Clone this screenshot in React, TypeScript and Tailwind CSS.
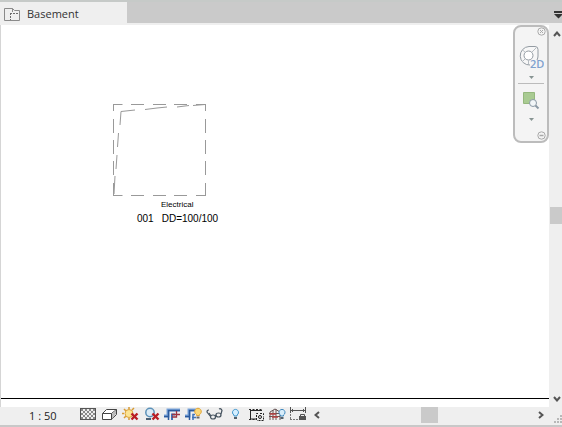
import type { ReactNode } from 'react';

function PlanIcon() {
  return (
    <svg width="16" height="14" viewBox="0 0 16 14" fill="none" stroke="#8a8a8a" aria-hidden="true">
      <path d="M6 12.500H.5V.5h8V4" />
      <path d="M8.500 .5l2 2h5v10h-4" />
      <path d="M6.500 5v8M6 5.500h9" stroke="#6a6a6a" strokeDasharray="2 1" />
      <path d="M6 12.500h6" />
    </svg>
  );
}

function TabBar() {
  return (
    <header className="flex h-[25px] shrink-0 flex-col border-t-2 border-[#c6cac8] bg-[#efefef]">
      <div className="flex min-h-0 flex-1 justify-between bg-[#cacaca]">
        <button type="button" className="flex w-[127px] items-center gap-[7px] bg-[#efefef] pt-1 pl-1 text-[11px] text-[#333]">
          <PlanIcon />
          <span>Basement</span>
        </button>
        <button type="button" aria-label="Open views" className="flex w-2 items-center pt-1">
          <svg width="8" height="8" viewBox="0 0 8 8" fill="#333" aria-hidden="true">
            <path d="M0 0h8v2H0zM0 3h8v1L4.500 7.500z" />
          </svg>
        </button>
      </div>
      <div className="h-[2px]" />
    </header>
  );
}

function Caret() {
  return (
    <svg width="5" height="3" viewBox="0 0 5 3" fill="#879492" aria-hidden="true">
      <path d="M0 0h5L2.500 3z" />
    </svg>
  );
}

function NavigationBar() {
  return (
    <nav
      aria-label="Navigation bar"
      className="absolute top-0 right-0 flex h-[118px] w-9 flex-col items-center rounded-lg border-2 border-[#bcbcbc] bg-[#f4f4f4]"
    >
      <button type="button" aria-label="Close" className="mr-px self-end">
        <svg width="9" height="9" viewBox="0 0 9 9" fill="none" stroke="#aaa" aria-hidden="true">
          <circle cx="4.500" cy="4.500" r="3.700" />
          <path d="M3 3l3 3M6 3L3 6" />
        </svg>
      </button>
      <button type="button" aria-label="2D steering wheel" className="mt-2">
        <svg width="26" height="26" viewBox="0 0 26 26" fill="none" stroke="#939ba2" aria-hidden="true">
          <path d="M12 21a9.200 9.200 0 0 1-1-18.500h6q3 0 3 3V12q0 2-1 4" fill="#f7f7f7" />
          <circle cx="10.500" cy="11.500" r="4.500" fill="#fff" />
          <path d="M4 18l3-3M14 8l4-4M4 5.500l3.500 3M10.500 16v4" stroke="#b7bdc2" />
          <text x="12" y="24" fontSize="11" fontWeight="600" fill="#7fa2cf" stroke="none" fontFamily="Open Sans, sans-serif">2D</text>
        </svg>
      </button>
      <button type="button" aria-label="Wheel options" className="mt-[6px] flex h-[3px] items-center">
        <Caret />
      </button>
      <div className="mt-[4px] h-px w-[26px] shrink-0 bg-[#bbb]" />
      <button type="button" aria-label="Zoom in region" className="mt-2">
        <svg width="18" height="18" viewBox="0 0 18 18" fill="none" aria-hidden="true">
          <path d="M1.500 .5h11v11h-11z" fill="#a9cb92" stroke="#95b87d" />
          <circle cx="11" cy="11" r="3.500" fill="#f2f6f8" stroke="#8b99a5" />
          <path d="M13.500 13.500l3 3" stroke="#8b99a5" strokeWidth="2" />
        </svg>
      </button>
      <button type="button" aria-label="Zoom options" className="mt-2 flex h-[3px] items-center">
        <Caret />
      </button>
      <button type="button" aria-label="Customize" className="mt-auto mr-px mb-px self-end">
        <svg width="9" height="9" viewBox="0 0 9 9" fill="none" stroke="#a8a8a8" aria-hidden="true">
          <circle cx="4.500" cy="4.500" r="3.700" />
          <path d="M2.500 4.500h4" strokeWidth="1.500" />
        </svg>
      </button>
    </nav>
  );
}

function Canvas() {
  return (
    <main className="relative min-w-0 flex-1 border-l border-[#d5d5d5] bg-white pb-2">
      <div className="h-full border-b border-black" />
      <svg className="absolute top-[79px] left-[112px]" width="94" height="93" viewBox="0 0 94 93" fill="none" stroke="#999" role="img" aria-label="Room outline">
        <path d="M.5 .5h9M18 .5h13M40 .5h13M61 .5h13M83 .5h9.500M.5 91.500h9M18 91.500h13M40 91.500h13M61 91.500h13M83 91.500h9.500" />
        <path d="M.5 0v7M.5 15v14M.5 36v14M.5 57v14M.5 79v13M92.500 0v7M92.500 15v14M92.500 36v14M92.500 57v14M92.500 79v13" />
        <path d="M8 7.500l14-1.500M32 5.500l12-1.500M44 4l10-1M64 3l12-1.500M80 1.500L92 .5M8 7.500L7 21M5.500 29L4.500 43M4 51L3 65M2 72L1 90" />
      </svg>
      <div className="absolute top-[174px] left-[136px] flex flex-col font-['Liberation_Sans',Arial,sans-serif] text-black">
        <span className="pl-6 text-[8px] leading-[12px]">Electrical</span>
        <span className="flex gap-2 text-[10px] leading-[15px]">
          <span>001</span>
          <span>DD=100/100</span>
        </span>
      </div>
      <NavigationBar />
    </main>
  );
}

function VerticalScrollbar() {
  return (
    <aside aria-label="Vertical scroll" className="flex w-[13px] shrink-0 flex-col items-center bg-[#efefef]">
      <button type="button" aria-label="Scroll up" className="flex h-[17px] w-full items-center justify-center pl-[3px]">
        <svg width="8" height="6" viewBox="0 0 8 6" fill="none" stroke="#555" strokeWidth="2" aria-hidden="true"><path d="M1 5l3-3.500L7 5" /></svg>
      </button>
      <div className="flex w-full flex-1 flex-col pl-px">
        <div className="flex-[164]" />
        <div className="h-[17px] bg-[#cacaca]" />
        <div className="flex-[166]" />
      </div>
      <button type="button" aria-label="Scroll down" className="flex h-[17px] w-full items-center justify-center pl-[3px]">
        <svg width="8" height="6" viewBox="0 0 8 6" fill="none" stroke="#555" strokeWidth="2" aria-hidden="true"><path d="M1 1l3 3.500L7 1" /></svg>
      </button>
    </aside>
  );
}

function Tool({ label, children }: { label: string; children: ReactNode }) {
  return (
    <button type="button" aria-label={label} className="flex h-[15px] w-[21px] shrink-0 items-center justify-center">
      <svg width="17" height="15" viewBox="0 0 17 15" fill="none" aria-hidden="true">{children}</svg>
    </button>
  );
}

function RedCross() {
  return <path d="M9.500 6.500l6 6M15.500 6.500l-6 6" stroke="#b91f25" strokeWidth="2.400" />;
}

function Bulb({ x, fill, stroke }: { x: number; fill: string; stroke: string }) {
  return (
    <g transform={`translate(${x} 0)`}>
      <path d="M-1.500 9V8a3 3 0 1 1 3 0v1z" fill={fill} stroke={stroke} />
      <path d="M-1.500 11h3" stroke="#54606a" strokeWidth="2" />
    </g>
  );
}

const checks = [0, 1, 2, 3, 4].flatMap((row) =>
  [0, 1, 2, 3, 4, 5, 6].filter((col) => (row + col) % 2 === 0).map((col) => ({ x: 1 + col * 2, y: 2 + row * 2 })),
);

function ViewControls() {
  return (
    <div className="flex" role="toolbar" aria-label="View controls">
      <Tool label="Detail level">
        <rect x=".5" y="1.500" width="15" height="11" fill="#eee" stroke="#555" />
        {checks.map((c) => <rect key={`${c.x}-${c.y}`} x={c.x} y={c.y} width="2" height="2" fill="#888" />)}
      </Tool>
      <Tool label="Visual style">
        <path d="M1.500 6.500l4-4h10v5l-5 5h-9z" fill="#fff" stroke="#444" />
        <path d="M1.500 6.500h9v6M10.500 6.500l5-4" stroke="#444" />
        <path d="M11 7l4-4v4l-4 5z" fill="#bbb" />
      </Tool>
      <Tool label="Sun path off">
        <path d="M7 0v2M7 11v2M0 6.500h2M2 2l2 2M12 1l-2 2M2 11l2-2" stroke="#d69b34" strokeWidth="1.500" />
        <circle cx="7" cy="6.500" r="4" fill="#fbe493" stroke="#dda23a" />
        <RedCross />
      </Tool>
      <Tool label="Shadows off">
        <circle cx="7" cy="5.500" r="4.200" fill="#dcecf7" stroke="#5c91b8" strokeWidth="1.500" />
        <path d="M3 12h5" stroke="#4a5f73" strokeWidth="2" />
        <RedCross />
      </Tool>
      <Tool label="Crop view">
        <path d="M0 9h4V3h12" stroke="#7ba6dc" strokeWidth="3" />
        <path d="M0 9.500h4M4.500 13V3.500H16" stroke="#2c5a9c" strokeWidth="1.500" />
        <path d="M8 13V7.500h3" stroke="#3e73b9" strokeWidth="2" />
        <path d="M8 7.500h8M12.500 4v6H8" stroke="#9c3442" strokeWidth="1.300" />
      </Tool>
      <Tool label="Show crop region">
        <path d="M0 9h4V3h7" stroke="#7ba6dc" strokeWidth="3" />
        <path d="M0 9.500h4M4.500 13V3.500H10" stroke="#2c5a9c" strokeWidth="1.500" />
        <path d="M8 13V7.500h2M7 10.500h4" stroke="#3e73b9" strokeWidth="1.500" />
        <path d="M11.500 8.500V7.500a3.300 3.300 0 1 1 3 0v1z" fill="#fbd878" stroke="#dfa43a" />
        <path d="M11.500 10.500h3" stroke="#666" strokeWidth="2" />
      </Tool>
      <Tool label="Temporary hide or isolate">
        <g stroke="#46535f" strokeWidth="1.200">
          <path d="M4.500 9.500L1 5q0-2 2-2" />
          <ellipse cx="7" cy="10" rx="2.500" ry="2" />
          <ellipse cx="12.500" cy="8" rx="2.500" ry="2" />
          <path d="M9 9l1-1M15 7l1-3.500q-1-2.500-3-1.500M5 9L3 6" />
        </g>
      </Tool>
      <Tool label="Reveal hidden elements">
        <Bulb x={8.500} fill="#d5efff" stroke="#3d94cc" />
      </Tool>
      <Tool label="Temporary view properties">
        <path d="M2 3.500h12M2 12h7M2.500 3.500V12" stroke="#292929" />
        <path d="M1 2.500h14M1 12.500h8" stroke="#292929" strokeDasharray="2 1.500" />
        <path d="M10 6.500H8.500V12M12 6.500h3.500v3M15.500 10.500v3H9" stroke="#222" strokeDasharray="2 1" />
        <circle cx="12" cy="10" r="1.500" stroke="#222" />
      </Tool>
      <Tool label="Analytical model">
        <path d="M1 13V5l5-3 5 3v8M4 3v10M7 2v11M0 6.500h11M0 9.500h11" stroke="#665353" />
        <path d="M1 7h6M3 10h6" stroke="#b94141" strokeWidth="1.500" />
        <Bulb x={13} fill="#d8edfa" stroke="#4089bf" />
      </Tool>
      <Tool label="Reveal constraints">
        <path d="M.5 0v6M15.500 0v6M1 3.500h14M3 2L1.500 3.500 3 5M13 2l1.500 1.500L13 5" stroke="#555" />
        <path d="M0 12.500h8M.5 7v6" stroke="#777" strokeDasharray="2 1" />
        <path d="M9 9h7v4H9z" fill="#555" />
        <path d="M10.500 9V7.500h4V9" stroke="#555" />
      </Tool>
    </div>
  );
}

function StatusBar() {
  return (
    <footer className="flex h-5 shrink-0 border-b-2 border-[#c8c8c8] bg-[#efefef]">
      <button type="button" className="w-[78px] shrink-0 pl-[29px] text-left text-[11px] leading-[16px] text-[#222]">1 : 50</button>
      <ViewControls />
      <div className="flex min-w-0 flex-1">
        <button type="button" aria-label="Scroll left" className="flex h-4 w-[15px] shrink-0 items-center justify-center">
          <svg width="6" height="8" viewBox="0 0 6 8" fill="none" stroke="#555" strokeWidth="2" aria-hidden="true"><path d="M5 1L1.500 4 5 7" /></svg>
        </button>
        <div className="flex h-4 flex-1">
          <div className="flex-[97]" />
          <div className="w-[17px] bg-[#cacaca]" />
          <div className="flex-[94]" />
        </div>
        <button type="button" aria-label="Scroll right" className="flex h-4 w-[17px] shrink-0 items-center justify-center">
          <svg width="6" height="8" viewBox="0 0 6 8" fill="none" stroke="#555" strokeWidth="2" aria-hidden="true"><path d="M1 1l3.500 3L1 7" /></svg>
        </button>
      </div>
      <div className="flex w-[13px] shrink-0 items-end justify-end pb-[2px]">
        <svg width="8" height="8" viewBox="0 0 8 8" fill="#b8b8b8" aria-hidden="true">
          <path d="M0 6h2v2H0zM3 6h2v2H3zM6 6h2v2H6zM3 3h2v2H3zM6 3h2v2H6zM6 0h2v2H6z" />
        </svg>
      </div>
    </footer>
  );
}

export default function App() {
  return (
    <div className="flex h-screen flex-col bg-white font-['Open_Sans','Noto_Sans',sans-serif]">
      <TabBar />
      <div className="flex min-h-0 flex-1">
        <Canvas />
        <VerticalScrollbar />
      </div>
      <StatusBar />
    </div>
  );
}
